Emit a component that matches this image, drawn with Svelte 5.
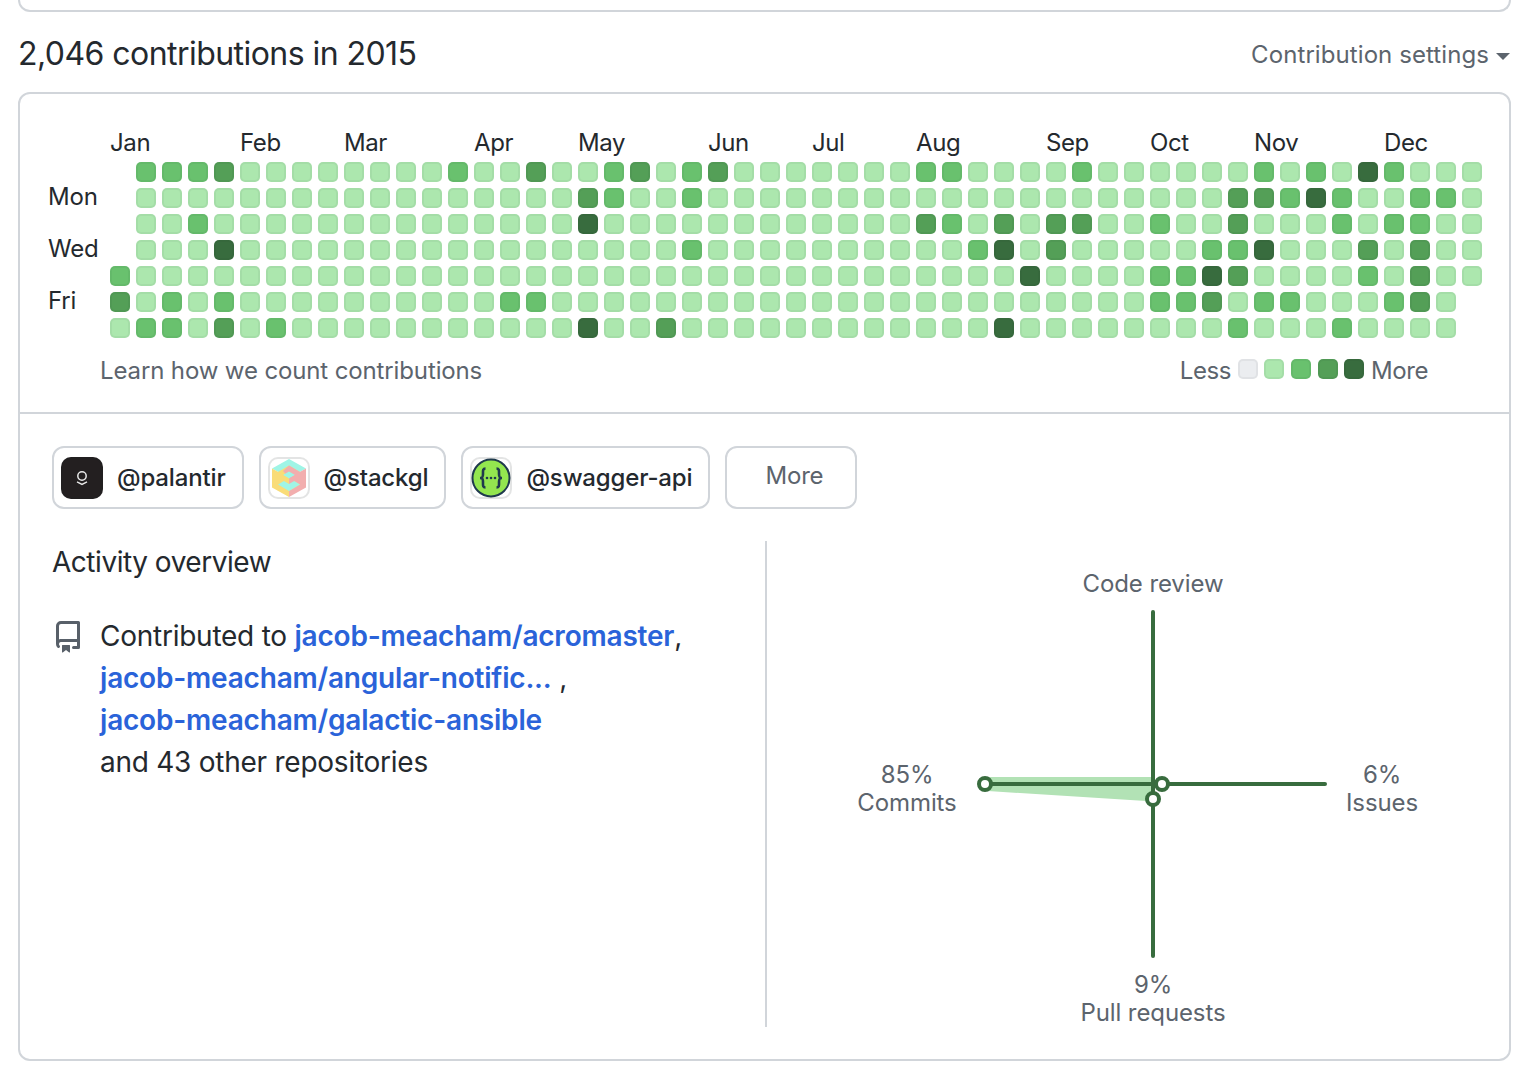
<script>
  const months = [
    ['Jan', 0], ['Feb', 5], ['Mar', 9], ['Apr', 14], ['May', 18], ['Jun', 23],
    ['Jul', 27], ['Aug', 31], ['Sep', 36], ['Oct', 40], ['Nov', 44], ['Dec', 49]
  ];
  const days = [['Mon', 1], ['Wed', 3], ['Fri', 5]];

  // column -> level for everything that isn't the lightest green
  const active = [
    { 1: 2, 2: 2, 3: 2, 4: 3, 13: 2, 16: 3, 19: 2, 20: 3, 22: 2, 23: 3, 31: 2, 32: 2, 37: 2, 44: 2, 46: 2, 48: 4, 49: 2 },
    { 18: 3, 19: 2, 22: 2, 43: 3, 44: 3, 45: 2, 46: 4, 47: 2, 50: 2, 51: 2 },
    { 3: 2, 18: 4, 31: 3, 32: 2, 34: 3, 36: 3, 37: 3, 40: 2, 43: 3, 47: 2, 49: 2, 50: 2 },
    { 4: 4, 22: 2, 33: 2, 34: 4, 36: 3, 42: 2, 43: 2, 44: 4, 48: 3, 50: 3 },
    { 0: 2, 35: 4, 40: 2, 41: 2, 42: 4, 43: 3, 48: 2, 50: 3 },
    { 0: 3, 2: 2, 4: 2, 15: 2, 16: 2, 40: 2, 41: 2, 42: 3, 44: 2, 45: 2, 49: 2, 50: 3 },
    { 1: 2, 2: 2, 4: 3, 6: 2, 18: 4, 21: 3, 34: 4, 43: 2, 47: 2 }
  ];

  const cells = [];
  for (let row = 0; row < 7; row++) {
    const first = row < 4 ? 1 : 0;
    const last = row < 5 ? 52 : 51;
    for (let col = first; col <= last; col++) {
      cells.push({ row, col, level: active[row][col] ?? 1 });
    }
  }
</script>

<div class="page">
  <div class="prev-card"></div>

  <div class="head">
    <h2>2,046 contributions in 2015</h2>
    <span class="settings">Contribution settings<i class="caret"></i></span>
  </div>

  <div class="card">
    <div class="calendar">
      <div class="graph">
        {#each months as [name, col]}
          <span class="month" style="grid-column: {col + 2}">{name}</span>
        {/each}
        {#each days as [name, row]}
          <span class="day" style="grid-row: {row + 2}">{name}</span>
        {/each}
        {#each cells as c}
          <span class="cell l{c.level}" style="grid-column: {c.col + 2}; grid-row: {c.row + 2}"></span>
        {/each}
      </div>
      <div class="graph-foot">
        <span class="learn">Learn how we count contributions</span>
        <div class="legend">
          <span class="less">Less</span>
          <span class="cell l0"></span>
          <span class="cell l1"></span>
          <span class="cell l2"></span>
          <span class="cell l3"></span>
          <span class="cell l4"></span>
          <span class="more">More</span>
        </div>
      </div>
    </div>

    <div class="details">
      <div class="orgs">
        <div class="org">
          <span class="avatar">
            <svg viewBox="0 0 42 42" width="42" height="42">
              <rect width="42" height="42" fill="#231f20" />
              <circle cx="21" cy="19" r="4.200" fill="none" stroke="#e8e8e8" stroke-width="1.500" />
              <path d="M16 24.800 L21 27.300 L26 24.800" fill="none" stroke="#e8e8e8" stroke-width="1.500" />
            </svg>
          </span>
          @palantir
        </div>
        <div class="org">
          <span class="avatar">
            <svg viewBox="0 0 42 42" width="42" height="42">
              <rect width="42" height="42" fill="#fff" />
              <path d="M21 2 L38 11.500 L21 21 L4 11.500 Z" fill="#9ff5e6" />
              <path d="M4 11.500 L21 21 L21 40 L4 30.500 Z" fill="#f9dc78" />
              <path d="M38 11.500 L21 21 L21 40 L38 30.500 Z" fill="#f2aeae" />
              <path d="M21 8.500 L32 15 L32 27.500 L21 34 L10 27.500 L10 15 Z" fill="#f9dc78" />
              <path d="M21 8.500 L32 15 L32 27.500 L21 21 L15 14 Z" fill="#f2aeae" />
              <path d="M10 27.500 L21 21 L32 27.500 L21 34 Z" fill="#9ff5e6" />
              <path d="M21 14.500 L27 18 L21 21.500 L15 18 Z" fill="#9ff5e6" />
              <path d="M15 18 L21 21.500 L21 27 L15 23.500 Z" fill="#f9dc78" />
              <path d="M27 18 L21 21.500 L21 27 L27 23.500 Z" fill="#f2aeae" />
            </svg>
          </span>
          @stackgl
        </div>
        <div class="org">
          <span class="avatar">
            <svg viewBox="0 0 42 42" width="42" height="42">
              <rect width="42" height="42" fill="#fff" />
              <circle cx="21" cy="21" r="18.500" fill="#93e64f" stroke="#1f3a4d" stroke-width="2" />
              <path d="M15.500 11.500 C12.500 11.500 13 14 13 17 C13 20 12.500 21 10 21 C12.500 21 13 22 13 25 C13 28 12.500 30.500 15.500 30.500" fill="none" stroke="#1f3a4d" stroke-width="2.600" />
              <path d="M26.500 11.500 C29.500 11.500 29 14 29 17 C29 20 29.500 21 32 21 C29.500 21 29 22 29 25 C29 28 29.500 30.500 26.500 30.500" fill="none" stroke="#1f3a4d" stroke-width="2.600" />
              <circle cx="17" cy="21" r="1.300" fill="#1f3a4d" />
              <circle cx="21" cy="21" r="1.300" fill="#1f3a4d" />
              <circle cx="25" cy="21" r="1.300" fill="#1f3a4d" />
            </svg>
          </span>
          @swagger-api
        </div>
        <div class="org more-btn">More</div>
      </div>

      <div class="columns">
        <div class="overview">
          <h3>Activity overview</h3>
          <div class="contrib">
            <svg class="repo-icon" viewBox="0 0 16 16" width="32" height="32" fill="#586069">
              <path fill-rule="evenodd" d="M2 2.500A2.500 2.500 0 0 1 4.500 0h8.750a.75.75 0 0 1 .75.75v12.500a.75.75 0 0 1-.75.75h-2.500a.75.75 0 1 1 0-1.500h1.750v-2h-8a1 1 0 0 0-.714 1.700.75.75 0 0 1-1.072 1.050A2.495 2.495 0 0 1 2 11.500v-9zm10.500-1V9h-8c-.356 0-.694.074-1 .208V2.500a1 1 0 0 1 1-1h8zM5 12.250v3.250a.25.25 0 0 0 .4.200l1.450-1.087a.25.25 0 0 1 .3 0L8.600 15.700a.25.25 0 0 0 .4-.200v-3.250a.25.25 0 0 0-.25-.25h-3.500a.25.25 0 0 0-.25.25z" />
            </svg>
            <p>
              Contributed to <a href="#a">jacob-meacham/acromaster</a>,<br />
              <a href="#b">jacob-meacham/angular-notific...</a> ,<br />
              <a href="#c">jacob-meacham/galactic-ansible</a><br />
              and 43 other repositories
            </p>
          </div>
        </div>

        <div class="activity">
          <svg viewBox="0 0 740 486" width="740" height="486">
            <polygon class="area" points="221,236 386,236 386,258 379,260 221,250" />
            <line class="axis" x1="386" y1="71" x2="386" y2="415" />
            <line class="axis" x1="220" y1="243" x2="558" y2="243" />
            <circle class="dot" cx="218" cy="243" r="6" />
            <circle class="dot" cx="395" cy="243" r="6" />
            <circle class="dot" cx="386" cy="258" r="6" />
            <text x="386" y="51">Code review</text>
            <text x="140" y="242">85%</text>
            <text x="140" y="270">Commits</text>
            <text x="615" y="242">6%</text>
            <text x="615" y="270">Issues</text>
            <text x="386" y="452">9%</text>
            <text x="386" y="480">Pull requests</text>
          </svg>
        </div>
      </div>
    </div>
  </div>
</div>

<style>
  :global(body) {
    margin: 0;
    background: #fff;
    font-family: Inter, "Liberation Sans", sans-serif;
    color: #24292e;
  }

  .page {
    width: 1493px;
    margin-left: 18px;
  }

  .prev-card {
    height: 10px;
    border: 2px solid #d1d5da;
    border-top: none;
    border-radius: 0 0 12px 12px;
  }

  .head {
    display: flex;
    justify-content: space-between;
    align-items: center;
    height: 80px;
  }

  h2 {
    margin: 3px 0 0;
    font-size: 32px;
    font-weight: 400;
    letter-spacing: -0.55px;
  }

  .settings {
    font-size: 24px;
    color: #5c646d;
    display: flex;
    align-items: center;
    margin: 4px 1px 0 0;
    letter-spacing: 0.08px;
  }

  .caret {
    width: 0;
    height: 0;
    margin-left: 7px;
    margin-top: 4px;
    border: 7.5px solid transparent;
    border-top-color: #5c646d;
    border-bottom: none;
  }

  .card {
    border: 2px solid #d1d5da;
    border-radius: 12px;
    height: 969px;
    box-sizing: border-box;
  }

  .calendar {
    height: 320px;
    box-sizing: border-box;
    border-bottom: 2px solid #d1d5da;
    padding: 34px 0 0 28px;
  }

  .graph {
    display: grid;
    grid-template-columns: 56px repeat(53, 20px);
    grid-template-rows: 28px repeat(7, 20px);
    gap: 6px;
  }

  .month {
    grid-row: 1;
    margin-top: 1px;
    font-size: 24px;
    line-height: 28px;
    letter-spacing: -0.4px;
    white-space: nowrap;
  }

  .day {
    grid-column: 1;
    font-size: 24px;
    line-height: 20px;
    letter-spacing: -0.2px;
    margin-top: -1px;
    white-space: nowrap;
  }

  .cell {
    width: 20px;
    height: 20px;
    box-sizing: border-box;
    border-radius: 5px;
    border: 2px solid rgba(27, 31, 35, 0.05);
    background-clip: padding-box;
  }

  .l0 { background: #ebedf0; }
  .l1 { background: #ace7ae; }
  .l2 { background: #69c16e; }
  .l3 { background: #549f57; }
  .l4 { background: #386c3e; }

  .graph-foot {
    display: flex;
    justify-content: space-between;
    align-items: center;
    margin: 18px 81px 0 52px;
    font-size: 24px;
    color: #5c646d;
  }

  .learn {
    letter-spacing: -0.13px;
  }

  .legend {
    display: flex;
    align-items: center;
    gap: 6.7px;
  }

  .less, .more {
    letter-spacing: -0.45px;
  }

  .legend .cell {
    margin-top: -4px;
  }

  .details {
    padding: 32px 32px 0 32px;
  }

  .orgs {
    display: flex;
    gap: 15px;
  }

  .org {
    height: 63px;
    box-sizing: border-box;
    display: flex;
    align-items: center;
    gap: 14px;
    padding: 0 16px 0 7px;
    border: 2px solid #d1d5da;
    border-radius: 12px;
    font-size: 24px;
    font-weight: 500;
    letter-spacing: -0.15px;
    white-space: nowrap;
  }

  .more-btn {
    width: 132px;
    justify-content: center;
    padding: 0 0 4px 6px;
    color: #5c646d;
    font-weight: 400;
    letter-spacing: -0.2px;
  }

  .avatar {
    width: 42px;
    height: 42px;
    border-radius: 10px;
    overflow: hidden;
    display: block;
    outline: 2px solid rgba(27, 31, 35, 0.12);
    outline-offset: -2px;
  }

  .avatar svg {
    display: block;
  }

  .columns {
    display: flex;
    margin-top: 32px;
  }

  .overview {
    flex: none;
    width: 713px;
    height: 486px;
    border-right: 2px solid #d1d5da;
  }

  h3 {
    margin: 0;
    font-size: 28px;
    font-weight: 400;
    line-height: 42px;
    letter-spacing: -0.47px;
  }

  .contrib {
    display: flex;
    gap: 16px;
    margin-top: 32px;
  }

  .repo-icon {
    flex: none;
    margin-top: 6px;
  }

  .contrib p {
    margin: 0;
    font-size: 28px;
    line-height: 42px;
    letter-spacing: -0.25px;
  }

  .contrib a {
    color: #2a63d9;
    font-weight: 600;
    letter-spacing: -0.2px;
    text-decoration: none;
  }

  .activity {
    flex: none;
  }

  .activity svg {
    display: block;
    overflow: visible;
  }

  .activity text {
    font-size: 24px;
    fill: #5c646d;
    text-anchor: middle;
    letter-spacing: -0.1px;
  }

  .area {
    fill: #b2e2b5;
  }

  .axis {
    stroke: #386c3e;
    stroke-width: 4;
    stroke-linecap: round;
  }

  .dot {
    fill: #fff;
    stroke: #386c3e;
    stroke-width: 4;
  }
</style>
